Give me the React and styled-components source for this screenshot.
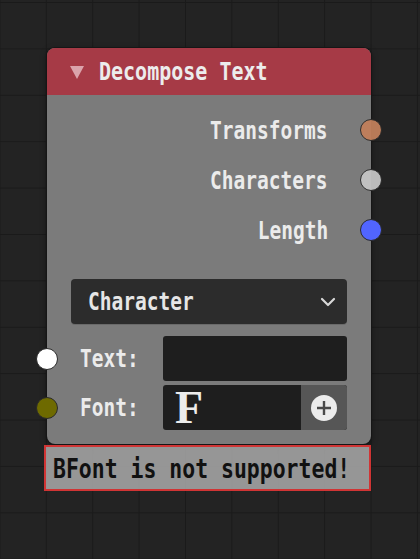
import React from "react";
import styled, { createGlobalStyle } from "styled-components";

const GlobalStyle = createGlobalStyle`
  html, body {
    margin: 0;
    padding: 0;
    background: #232323;
  }
  * { box-sizing: border-box; }
`;

const Canvas = styled.div`
  position: relative;
  width: 420px;
  height: 559px;
  overflow: hidden;
  background-color: #232323;
  background-image:
    linear-gradient(to right, #1a1a1a 1px, transparent 1px),
    linear-gradient(to bottom, #1a1a1a 1px, transparent 1px);
  background-size: 46.4px 46.4px;
  background-position: -0.6px 2px;
  font-family: "DejaVu Sans Mono", monospace;
`;

const Group = styled.div`
  position: absolute;
  left: 44px;
  top: 48px;
  width: 327px;
  display: flex;
  flex-direction: column;
  align-items: flex-end;
`;

const Node = styled.div`
  width: 324px;
  border-radius: 8px;
  background: #7b7b7b;
  box-shadow: 0 0 0 1px #161616, 0 2px 6px rgba(0, 0, 0, 0.5);
`;

/* the node font is a tall, narrow mono: DejaVu Sans Mono squeezed sideways */
const Txt = styled.span`
  display: inline-block;
  white-space: nowrap;
  font-weight: bold;
  font-size: ${(p) => p.$size || 25}px;
  line-height: 1;
  transform: scaleX(${(p) => p.$scale || 0.78});
  transform-origin: ${(p) => (p.$right ? "right" : "left")} center;
  color: ${(p) => p.$color || "#ebebeb"};
`;

const Header = styled.div`
  height: 47px;
  display: flex;
  align-items: center;
  gap: 15px;
  padding-left: 23px;
  background: #a63a46;
  border-radius: 8px 8px 0 0;
`;

const Caret = styled.span`
  width: 0;
  height: 0;
  border-left: 7px solid transparent;
  border-right: 7px solid transparent;
  border-top: 13px solid #dba3ab;
  margin-top: 2px;
`;

const Body = styled.div`
  padding: 10px 0 14px;
  display: flex;
  flex-direction: column;
`;

const OutputRow = styled.div`
  position: relative;
  height: 50px;
  display: flex;
  align-items: center;
  justify-content: flex-end;
  padding-right: 43px;
`;

const Socket = styled.span`
  position: absolute;
  top: 50%;
  ${(p) => (p.$side === "left" ? "left: -11px;" : "right: -11px;")}
  width: 22px;
  height: 22px;
  margin-top: -11px;
  border-radius: 50%;
  border: 1px solid #2a2a2a;
  background: ${(p) => p.$color};
  opacity: ${(p) => p.$alpha || 1};
`;

const Select = styled.div`
  margin: 24px 24px 0 24px;
  height: 45px;
  border-radius: 4px;
  background: #2c2c2c;
  box-shadow: 0 1px 0 #6a6a6a;
  display: flex;
  align-items: center;
  justify-content: space-between;
  padding: 0 10px 0 17px;
`;

const InputRow = styled.div`
  position: relative;
  display: flex;
  align-items: center;
  height: 45px;
  margin-top: ${(p) => p.$top}px;
  padding: 0 24px 0 33px;
`;

const Label = styled.span`
  width: 83px;
`;

const Field = styled.div`
  flex: 1;
  height: 100%;
  border-radius: 3px;
  background: #1e1e1e;
  display: flex;
`;

const FontGlyph = styled.div`
  flex: 1;
  padding-left: 12px;
  color: #ececec;
  font-family: "Liberation Serif", serif;
  font-weight: bold;
  font-size: 46px;
  line-height: 46px;
`;

const AddButton = styled.div`
  width: 46px;
  background: #565656;
  border-radius: 0 3px 3px 0;
  display: flex;
  align-items: center;
  justify-content: center;
`;

const ErrorBox = styled.div`
  width: 327px;
  height: 46px;
  margin-top: 1px;
  border: 2px solid #d03434;
  background: rgba(170, 170, 170, 0.85);
  display: flex;
  align-items: center;
  padding-left: 7px;
`;

const outputs = [
  { label: "Transforms", color: "#c17f5b", alpha: 0.95 },
  { label: "Characters", color: "#c4c4c4", alpha: 0.95 },
  { label: "Length", color: "#5165ff", alpha: 1 },
];

export default function App() {
  return (
    <>
      <GlobalStyle />
      <Canvas>
        <Group>
          <Node>
            <Header>
              <Caret />
              <Txt $scale={0.8} $color="#ececec">Decompose Text</Txt>
            </Header>
            <Body>
              {outputs.map((o) => (
                <OutputRow key={o.label}>
                  <Txt $right>{o.label}</Txt>
                  <Socket $color={o.color} $alpha={o.alpha} />
                </OutputRow>
              ))}
              <Select>
                <Txt $color="#e6e6e6">Character</Txt>
                <svg width="18" height="12" viewBox="0 0 18 12">
                  <path d="M3 3 L9 9 L15 3" fill="none" stroke="#d8d8d8" strokeWidth="2.2" strokeLinecap="round" strokeLinejoin="round" />
                </svg>
              </Select>
              <InputRow $top={12}>
                <Socket $side="left" $color="#ffffff" />
                <Label><Txt>Text:</Txt></Label>
                <Field />
              </InputRow>
              <InputRow $top={4}>
                <Socket $side="left" $color="#6e6a00" />
                <Label><Txt>Font:</Txt></Label>
                <Field>
                  <FontGlyph>F</FontGlyph>
                  <AddButton>
                    <svg width="28" height="28" viewBox="0 0 28 28">
                      <circle cx="14" cy="14" r="13" fill="#ececec" />
                      <path d="M14 7 V21 M7 14 H21" stroke="#4a4a4a" strokeWidth="2.4" />
                    </svg>
                  </AddButton>
                </Field>
              </InputRow>
            </Body>
          </Node>
          <ErrorBox>
            <Txt $size={27} $scale={0.795} $color="#111">BFont is not supported!</Txt>
          </ErrorBox>
        </Group>
      </Canvas>
    </>
  );
}
